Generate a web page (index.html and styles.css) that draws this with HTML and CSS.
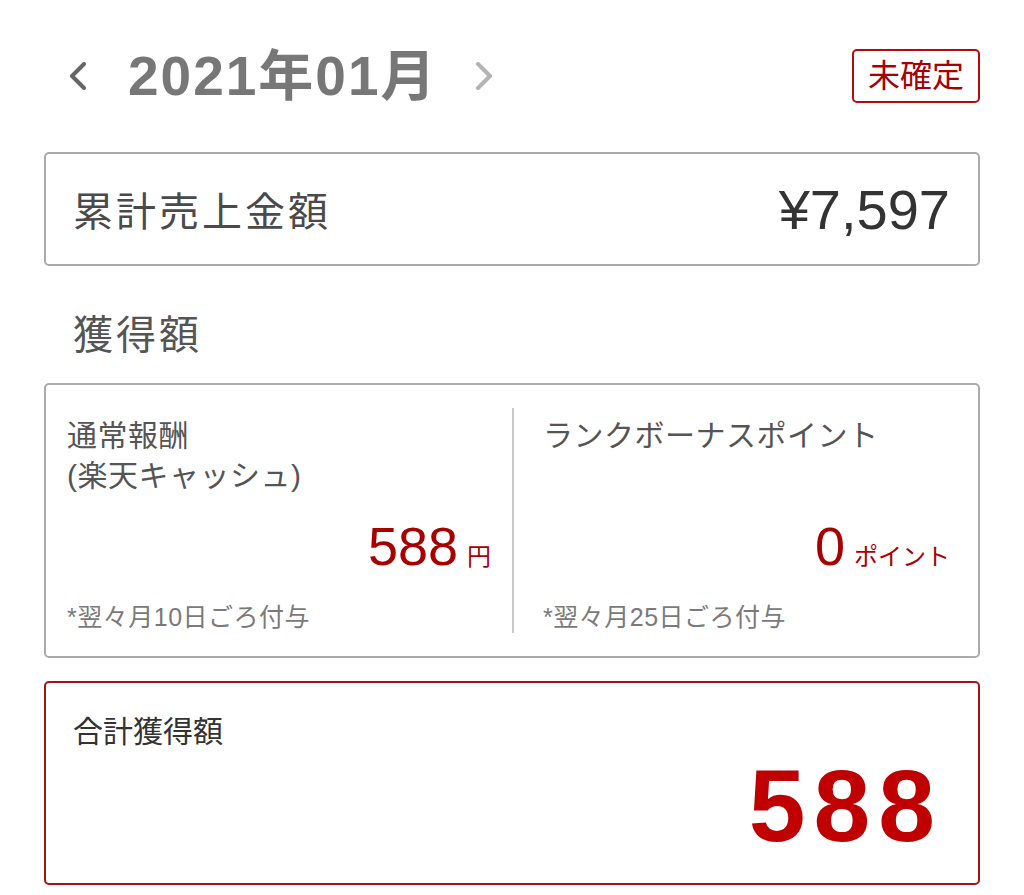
FILE: index.html
```html
<!DOCTYPE html>
<html lang="ja">
<head>
<meta charset="utf-8">
<link rel="stylesheet" href="styles.css">
</head>
<body>
<div class="page">
  <header class="header">
    <div class="month-nav">
      <svg class="chev chev-prev" width="20" height="28" viewBox="0 0 20 28"><polyline points="16,2 4,14 16,26" fill="none" stroke="#666" stroke-width="4" stroke-linecap="round" stroke-linejoin="round"/></svg>
      <h1 class="month">2021年01月</h1>
      <svg class="chev chev-next" width="20" height="28" viewBox="0 0 20 28"><polyline points="4,2 16,14 4,26" fill="none" stroke="#b3b3b3" stroke-width="4" stroke-linecap="round" stroke-linejoin="round"/></svg>
    </div>
    <div class="badge">未確定</div>
  </header>

  <section class="box sales">
    <span class="sales-label">累計売上金額</span>
    <span class="sales-amount">¥7,597</span>
  </section>

  <h2 class="section-title">獲得額</h2>

  <section class="box earn">
    <div class="col col-left">
      <div class="col-label">通常報酬<br>(楽天キャッシュ)</div>
      <div class="col-value"><span class="num">588</span><span class="unit">円</span></div>
      <div class="col-note">*翌々月10日ごろ付与</div>
    </div>
    <div class="col col-right">
      <div class="col-label">ランクボーナスポイント</div>
      <div class="col-value"><span class="num">0</span><span class="unit">ポイント</span></div>
      <div class="col-note">*翌々月25日ごろ付与</div>
    </div>
  </section>

  <section class="box total">
    <div class="total-label">合計獲得額</div>
    <div class="total-value">588</div>
  </section>
</div>
</body>
</html>
```

FILE: styles.css
```css
* { box-sizing: border-box; }
html, body { margin: 0; padding: 0; background: #fff; }
body {
  font-family: "Liberation Sans", "Noto Sans CJK JP", sans-serif;
  color: #444;
}
.page {
  width: 1024px;
  padding: 48px 44px 0 44px;
}
.header {
  display: flex;
  align-items: center;
  justify-content: space-between;
  height: 56px;
}
.month-nav {
  display: flex;
  align-items: center;
  padding-left: 24px;
}
.chev { display: block; }
.month {
  margin: 0 36px 0 40px;
  font-size: 55px;
  font-weight: 700;
  color: #777;
  line-height: 56px;
  letter-spacing: 2px;
}
.badge {
  width: 128px;
  height: 54px;
  border: 2px solid #b40a0a;
  border-radius: 5px;
  color: #a80000;
  font-size: 32px;
  line-height: 50px;
  text-align: center;
}
.box {
  border: 2px solid #ababab;
  border-radius: 5px;
}
.sales {
  margin-top: 48px;
  height: 114px;
  display: flex;
  align-items: center;
  justify-content: space-between;
  padding: 0 28px 0 27px;
}
.sales-label {
  font-size: 40px;
  letter-spacing: 3px;
  color: #4a4a4a;
}
.sales-amount {
  font-size: 56px;
  color: #333;
}
.section-title {
  margin: 41px 0 20px 29px;
  font-size: 40px;
  font-weight: 400;
  line-height: 56px;
  letter-spacing: 3px;
  color: #555;
}
.earn {
  height: 275px;
  display: grid;
  grid-template-columns: 1fr 1fr;
  padding: 23px 0;
}
.col {
  display: flex;
  flex-direction: column;
  padding-top: 8px;
  min-width: 0;
}
.col-left { padding-left: 21px; padding-right: 21px; }
.col-right {
  border-left: 2px solid #c8c8c8;
  padding-left: 29px;
  padding-right: 28px;
}
.col-label {
  font-size: 30px;
  line-height: 40px;
  letter-spacing: 0.5px;
  color: #555;
}
.col-value {
  margin-top: auto;
  margin-bottom: 11px;
  text-align: right;
  color: #a80000;
  line-height: 60px;
}
.col-value .num { font-size: 54px; }
.col-value .unit { font-size: 24px; margin-left: 9px; }
.col-note {
  font-size: 25px;
  line-height: 32px;
  letter-spacing: 0.5px;
  color: #7a7a7a;
}
.total {
  margin-top: 23px;
  height: 204px;
  border-color: #a51212;
  padding: 29px 35px 0 27px;
}
.total-label {
  font-size: 30px;
  line-height: 40px;
  color: #333;
}
.total-value {
  margin-top: 4px;
  text-align: right;
  font-size: 102px;
  line-height: 100px;
  font-weight: 700;
  letter-spacing: 8px;
  color: #c00000;
}
```
